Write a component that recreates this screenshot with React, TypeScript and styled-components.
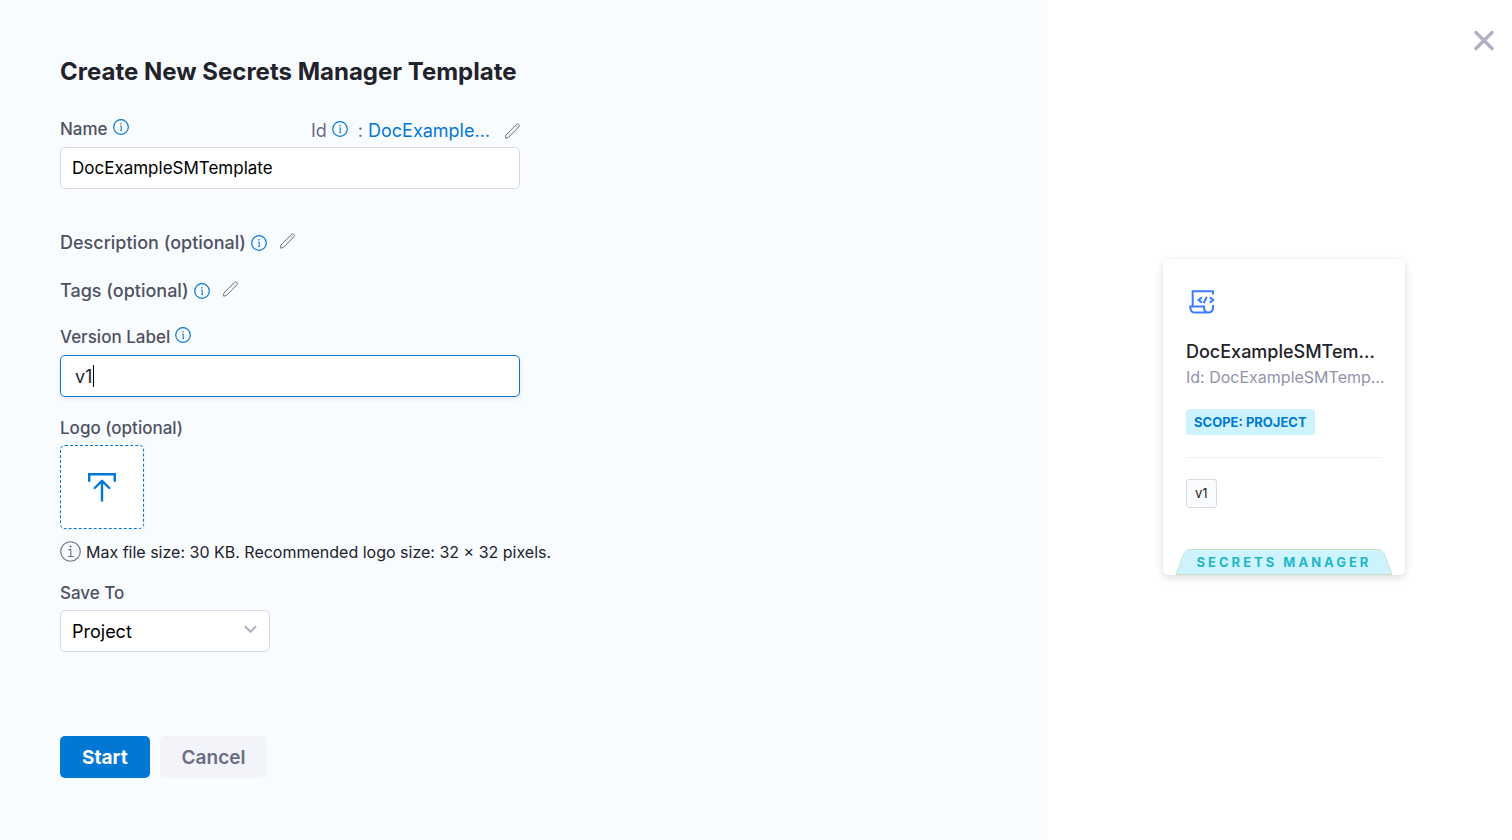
import React, { useState } from 'react';
import styled, { createGlobalStyle, css } from 'styled-components';

const blue = '#0278d5';

const GlobalStyle = createGlobalStyle`
  *, *::before, *::after { box-sizing: border-box; }
  body { margin: 0; background: #fff; font-family: Inter, "Liberation Sans", sans-serif; color: #22222a; }
  button, input, select { font-family: inherit; margin: 0; }
`;

const Page = styled.div`
  display: grid;
  grid-template-columns: minmax(0, 1fr) 464px;
  min-height: 100vh;
`;

const FormPanel = styled.main`
  background: #f9fcff;
  padding: 56px 60px;
`;

const Title = styled.h1`
  margin: 0 0 31px;
  font-size: 24px;
  line-height: 32px;
  font-weight: 650;
`;

const Form = styled.form`
  display: flex;
  flex-direction: column;
  align-items: flex-start;
`;

const Field = styled.div<{ $top?: number; $gap?: number }>`
  display: flex;
  flex-direction: column;
  gap: ${p => p.$gap ?? 8}px;
  width: 100%;
  max-width: 460px;
  margin-top: ${p => p.$top ?? 0}px;
`;

const HeadRow = styled.div`
  display: flex;
  justify-content: space-between;
  align-items: flex-start;
`;

const LabelRow = styled.div<{ $raised?: boolean }>`
  display: flex;
  align-items: ${p => (p.$raised ? 'flex-start' : 'center')};
  gap: 5px;
  height: ${p => (p.$raised ? 20 : 24)}px;
`;

const labelText = css`
  font-size: 17px;
  line-height: 20px;
  font-weight: 500;
  color: #4f5162;
  white-space: nowrap;
`;

const Label = styled.label`${labelText}`;
const LabelText = styled.span<{ $large?: boolean }>`
  ${labelText}
  ${p => p.$large && 'font-size: 18px;'}
`;

const IdGroup = styled.div`
  display: flex;
  align-items: center;
  height: 24px;
  font-size: 18px;
  line-height: 24px;
  color: #6b6d85;
`;

const IdColon = styled.span`
  margin: 0 5px 0 10px;
`;

const IdValue = styled.span`
  width: 125px;
  margin-right: 12px;
  color: ${blue};
  overflow: hidden;
  text-overflow: ellipsis;
  white-space: nowrap;
`;

const IconButton = styled.button<{ $spaced?: boolean }>`
  display: flex;
  padding: ${p => (p.$spaced ? 2 : 0)}px 0 0;
  border: 0;
  background: none;
  color: #6b6d85;
  cursor: pointer;
  margin-left: ${p => (p.$spaced ? 8 : 0)}px;
  ${p => p.$spaced && 'align-self: flex-start;'}
`;

const HelpIcon = styled.svg<{ $inline?: boolean }>`
  flex: none;
  color: ${blue};
  margin: ${p => (p.$inline ? '0 0 4px 5px' : '0')};
`;

const InputWrap = styled.div`
  position: relative;
`;

const TextInput = styled.input<{ $active?: boolean }>`
  display: block;
  width: 100%;
  height: 42px;
  padding: 0 ${p => (p.$active ? 14 : 11)}px;
  border: 1px solid ${p => (p.$active ? blue : '#d9dae6')};
  border-radius: 5px;
  background: #fff;
  color: ${p => (p.$active ? '#22222a' : '#000')};
  font-size: ${p => (p.$active ? 18 : 17)}px;
  outline: none;
  box-shadow: ${p => (p.$active ? '0 2px 4px rgba(40, 41, 61, 0.1)' : 'none')};
`;

const Caret = styled.span`
  position: absolute;
  left: 33px;
  top: 10px;
  width: 1px;
  height: 22px;
  background: #000;
`;

const UploadButton = styled.button`
  display: flex;
  align-items: center;
  justify-content: center;
  width: 84px;
  height: 84px;
  padding: 0;
  border: 1px dashed ${blue};
  border-radius: 5px;
  background: #fff;
  color: ${blue};
  box-shadow: 0 1px 3px rgba(40, 41, 61, 0.06);
  cursor: pointer;
`;

const Hint = styled.p`
  display: flex;
  align-items: center;
  gap: 5px;
  margin: 12px 0 0;
  font-size: 16px;
  line-height: 20px;
  white-space: nowrap;
`;

const SelectWrap = styled.div`
  position: relative;
  width: 210px;
`;

const Select = styled.select`
  display: block;
  appearance: none;
  width: 100%;
  height: 42px;
  padding: 0 32px 0 11px;
  border: 1px solid #d9dae6;
  border-radius: 5px;
  background: #fff;
  color: #000;
  font-size: 18px;
`;

const Chevron = styled.svg`
  position: absolute;
  right: 13px;
  top: 15px;
  pointer-events: none;
`;

const Actions = styled.div`
  display: flex;
  gap: 10px;
  margin-top: 84px;
`;

const Button = styled.button<{ $primary?: boolean }>`
  height: 42px;
  padding: 0 22px;
  border: 0;
  border-radius: 5px;
  font-size: 19px;
  font-weight: ${p => (p.$primary ? 700 : 600)};
  background: ${p => (p.$primary ? blue : '#f3f3fa')};
  color: ${p => (p.$primary ? '#fff' : '#6b6d85')};
  cursor: pointer;
`;

const PreviewPanel = styled.aside`
  display: flex;
  flex-direction: column;
  align-items: center;
  justify-content: center;
  position: relative;
  padding: 0 0 6px 8px;
  background: #fff;
`;

const CloseButton = styled.button`
  position: absolute;
  top: 30px;
  right: 18px;
  display: flex;
  padding: 0;
  border: 0;
  background: none;
  cursor: pointer;
`;

const Card = styled.article`
  display: flex;
  flex-direction: column;
  align-items: flex-start;
  width: 242px;
  padding: 28px 23px 0;
  border-radius: 5px;
  background: #fff;
  box-shadow: 0 0 2px rgba(40, 41, 61, 0.06), 0 3px 9px rgba(96, 97, 112, 0.2);
`;

const CardTitle = styled.h2`
  width: 100%;
  margin: 24px 0 0;
  font-size: 18px;
  line-height: 26px;
  font-weight: 500;
  overflow: hidden;
  text-overflow: ellipsis;
  white-space: nowrap;
`;

const CardId = styled.p`
  width: calc(100% + 4px);
  margin: 1px 0 0;
  font-size: 16px;
  line-height: 22px;
  color: #9293ab;
  overflow: hidden;
  text-overflow: ellipsis;
  white-space: nowrap;
`;

const Scope = styled.span`
  margin-top: 21px;
  padding: 0 8px;
  border-radius: 4px;
  background: #cdf4fe;
  color: ${blue};
  font-size: 13px;
  line-height: 26px;
  font-weight: 700;
`;

const Divider = styled.hr`
  width: 100%;
  margin: 22px 0 21px;
  border: 0;
  border-top: 1px solid #eeeff5;
`;

const Version = styled.span`
  padding: 0 8px;
  border: 1px solid #d9dae6;
  border-radius: 3px;
  background: #fafbfc;
  font-size: 13px;
  line-height: 27px;
`;

const Ribbon = styled.div`
  position: relative;
  align-self: center;
  width: 218px;
  height: 26px;
  margin-top: 41px;
`;

const RibbonShape = styled.svg`
  display: block;
`;

const RibbonText = styled.span`
  position: absolute;
  inset: 0;
  text-align: center;
  font-size: 13px;
  line-height: 27px;
  font-weight: 700;
  letter-spacing: 3px;
  color: #1fb7c6;
`;

const Help = ({ inline }: { inline?: boolean }) => (
  <HelpIcon $inline={inline} width="16" height="16" viewBox="0 0 16 16" fill="none" stroke="currentColor" strokeWidth="1.2">
    <circle cx="8" cy="8" r="7.3" />
    <path d="M7.2 6.900H8.200V11.600M7.300 11.500H9" strokeWidth="1" />
    <circle cx="8" cy="4.800" r="0.800" fill="currentColor" stroke="none" />
  </HelpIcon>
);

const Pencil = () => (
  <svg width="15" height="16" viewBox="0 0 15 16" fill="none" stroke="currentColor" strokeWidth="1" strokeLinejoin="round">
    <path d="M0.8 12.200L11.400 1.400C12.100 0.700 13.100 0.700 13.700 1.300C14.500 2.100 14.500 3.100 13.800 3.800L3.600 14.300L1 15.200C0.700 15.300 0.500 15.100 0.600 14.800Z" />
    <path d="M10.200 2.800L12.600 5.100" opacity="0.400" />
  </svg>
);

const templateName = 'DocExampleSMTemplate';

export default function App() {
  const [name, setName] = useState(templateName);
  const [version, setVersion] = useState('v1');

  return (
    <>
      <GlobalStyle />
      <Page>
        <FormPanel>
          <Title>Create New Secrets Manager Template</Title>
          <Form onSubmit={e => e.preventDefault()}>
            <Field $gap={4}>
              <HeadRow>
                <LabelRow $raised>
                  <Label htmlFor="name">Name</Label>
                  <Help />
                </LabelRow>
                <IdGroup>
                  Id
                  <Help inline />
                  <IdColon>:</IdColon>
                  <IdValue>{name}</IdValue>
                  <IconButton type="button" aria-label="Edit id"><Pencil /></IconButton>
                </IdGroup>
              </HeadRow>
              <TextInput id="name" value={name} onChange={e => setName(e.target.value)} />
            </Field>

            <Field $top={42}>
              <LabelRow>
                <LabelText $large>Description (optional)</LabelText>
                <Help />
                <IconButton type="button" $spaced aria-label="Edit description"><Pencil /></IconButton>
              </LabelRow>
            </Field>

            <Field $top={24}>
              <LabelRow>
                <LabelText $large>Tags (optional)</LabelText>
                <Help />
                <IconButton type="button" $spaced aria-label="Edit tags"><Pencil /></IconButton>
              </LabelRow>
            </Field>

            <Field $top={24}>
              <LabelRow $raised>
                <Label htmlFor="version">Version Label</Label>
                <Help />
              </LabelRow>
              <InputWrap>
                <TextInput id="version" $active value={version} onChange={e => setVersion(e.target.value)} />
                <Caret />
              </InputWrap>
            </Field>

            <Field $top={21} $gap={7}>
              <LabelText>Logo (optional)</LabelText>
              <UploadButton type="button" aria-label="Upload logo">
                <svg width="30" height="30" viewBox="0 0 30 30" fill="none" stroke="currentColor" strokeWidth="2.4" strokeLinecap="round">
                  <path d="M2.200 8.700V2.200H27.800V8.700" />
                  <path d="M15 28.500V9M7.700 16L15 8.800L22.300 16" strokeLinejoin="round" />
                </svg>
              </UploadButton>
            </Field>
            <Hint>
              <svg width="21" height="21" viewBox="0 0 21 21" fill="none" stroke="#6b6d85" strokeWidth="1.1">
                <circle cx="10.5" cy="10.5" r="9.8" />
                <path d="M8.400 8.600H10.800V15.300M8 15.500H13.600" />
                <circle cx="10.5" cy="5.500" r="1.100" fill="#6b6d85" stroke="none" />
              </svg>
              Max file size: 30 KB. Recommended logo size: 32 × 32 pixels.
            </Hint>

            <Field $top={21} $gap={7}>
              <Label htmlFor="save-to">Save To</Label>
              <SelectWrap>
                <Select id="save-to" defaultValue="Project">
                  <option>Project</option>
                </Select>
                <Chevron width="13" height="9" viewBox="0 0 13 9" fill="none" stroke="#b0b1c4" strokeWidth="1.9" strokeLinecap="round">
                  <path d="M1.400 1.800L6.500 6.800L11.600 1.800" />
                </Chevron>
              </SelectWrap>
            </Field>

            <Actions>
              <Button type="submit" $primary>Start</Button>
              <Button type="button">Cancel</Button>
            </Actions>
          </Form>
        </FormPanel>

        <PreviewPanel>
          <CloseButton aria-label="Close">
            <svg width="20" height="21" viewBox="0 0 20 21" fill="none" stroke="#b0b1c4" strokeWidth="3.4" strokeLinecap="round">
              <path d="M2 2.500L18 18.500M18 2.500L2 18.500" />
            </svg>
          </CloseButton>
          <Card>
            <svg width="32" height="28" viewBox="0 0 32 28" fill="none" stroke="#3d7bff" strokeWidth="2">
              <path d="M6.700 19.500V4.200H27V7.600" />
              <path d="M27 18V20.500C27 23.600 25 25.600 22 25.600H9C5.900 25.600 4.200 23.400 4.200 19.500H18C18 23.500 19.500 25.600 22 25.600" />
              <path d="M16 10.400L12.600 13L16 15.600M20.800 9.700L17.600 16.300M23.800 10.400L27.200 13L23.800 15.600" />
            </svg>
            <CardTitle>{name}</CardTitle>
            <CardId>Id: {name}</CardId>
            <Scope>SCOPE: PROJECT</Scope>
            <Divider />
            <Version>{version}</Version>
            <Ribbon>
              <RibbonShape width="218" height="26" viewBox="0 0 218 26">
                <path d="M1 25.500L8.500 5.500C10 1.800 12 0.500 16 0.500H202C206 0.500 208 1.800 209.500 5.500L217 25.500Z" fill="#cdf4fe" stroke="#c5e3c4" strokeWidth="1" />
              </RibbonShape>
              <RibbonText>SECRETS MANAGER</RibbonText>
            </Ribbon>
          </Card>
        </PreviewPanel>
      </Page>
    </>
  );
}
